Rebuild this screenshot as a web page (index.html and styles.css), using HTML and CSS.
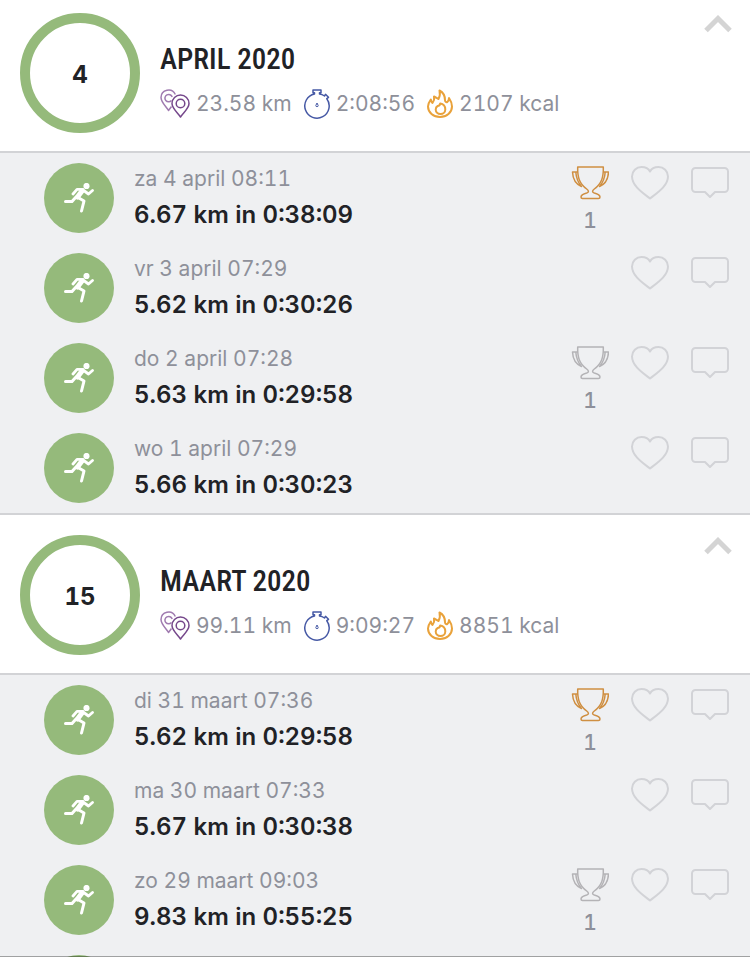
FILE: index.html
```html
<!DOCTYPE html>
<html lang="nl">
<head>
    <meta charset="utf-8">
    <meta name="viewport" content="width=device-width, initial-scale=1">
    <title>Activiteiten</title>

    <link rel="stylesheet" href="styles.css">
</head>
<body>
    <!-- Shared icons -->
    <svg class="sprite" width="0" height="0" aria-hidden="true">
        <symbol id="pins" viewBox="0 0 30 30">
            <path d="M11.5 17.5 8.500 21.500C7 18.500 1 13.500 1 8.500a7.500 7.500 0 0 1 14.300-3M11.500 11.500A3.700 3.700 0 1 1 12.200 8" stroke="#a07bb0"/>
            <path d="M20.500 28C18 24 12 19.500 12 14.500a8.500 8.500 0 0 1 17 0c0 5-6 9.500-8.500 13.500Z" stroke="#75478b"/>
            <circle cx="20.500" cy="14.500" r="4.300" stroke="#75478b"/>
        </symbol>
        <symbol id="timer" viewBox="0 0 26 30">
            <path d="M10.500 5V3.700H9V1h8v2.700h-1.500V5c1.900.2 3.500.9 5 2l1-1.700 3 3-1.700 1.400A12.200 12.200 0 1 1 10.500 5Z"/>
            <path class="fill" d="M13 14 14.200 16.500a1.200 1.200 0 1 1-2.400 0Z" stroke-width="1"/>
        </symbol>
        <symbol id="flame" viewBox="0 0 26 30">
            <path d="M7 7.500c.6 2.500 0 4.500-1.500 6.500C4.500 13 4 12 3.800 10.500 2 13 1 15 1 17.500a12 10.500 0 0 0 24 0c0-3-1-5.500-3-8.500-.1 2-.6 3-1.700 4-1.300.5-2.300-.5-2.300-1.800C18 7 16.500 3.500 12.500 1.500c.8 3.500.5 6-1 8.500C10.500 9.500 9 8.500 7 7.500Z"/>
            <path d="M13.200 14.500c-.3 1.500-1 2.500-2.500 2.500-1.500.8-2 2.200-2 3.500a4.800 4.500 0 0 0 9.600 0c0-3-1.800-5.500-5.100-6Z"/>
        </symbol>
        <symbol id="runner" viewBox="0 0 30 30">
            <circle class="head" cx="22.500" cy="3" r="3.100"/>
            <path d="M9 11 13 6.300H19M19 7l5.500 4L28.500 7.500" stroke-width="2.800"/>
            <path d="M18 8 13.500 14" stroke-width="5"/>
            <path d="M12 14 8 18.500H1.500M14 14.500l6 3.500L17.500 28" stroke-width="3"/>
        </symbol>
        <symbol id="trophy" viewBox="0 0 38 36">
            <path d="M6.700 2h25.600c.3 10-1.500 16.500-9 22-2.300 1.800-2.300 3.200 0 4 3.500 1 5.700 1.700 5.700 4 0 1-.5 1.500-1.500 1.500h-16c-1 0-1.500-.5-1.500-1.500 0-2.300 2.200-3 5.700-4 2.300-.8 2.300-2.200 0-4-7.500-5.500-9.300-12-9-22Z"/>
            <path d="M6.700 7H1.500c.3 6.500 3 12 9 14.500C7 17.500 5.200 13 4.800 7M32.300 7h5.200c-.3 6.500-3 12-9 14.500C32 17.500 33.800 13 34.200 7"/>
        </symbol>
        <symbol id="heart" viewBox="0 0 40 36">
            <path d="M20 33.500C13 28 2 21 2 11.500A9.500 9.500 0 0 1 11.500 2C15.500 2 18.500 3.500 20 6.500 21.500 3.500 24.500 2 28.500 2a9.500 9.500 0 0 1 9.500 9.500C38 21 27 28 20 33.500Z"/>
        </symbol>
        <symbol id="comment" viewBox="0 0 40 36">
            <path d="M5.500 3h29a3.500 3.500 0 0 1 3.500 3.500v17a3.500 3.500 0 0 1-3.500 3.500H25l-5 5-5-5H5.500A3.500 3.500 0 0 1 2 23.500v-17A3.500 3.500 0 0 1 5.500 3Z"/>
        </symbol>
        <symbol id="chevron" viewBox="0 0 28 18">
            <path d="M2 15.500 14 3.500 26 15.500"/>
        </symbol>
    </svg>

    <main class="history">
        <section class="month">
            <header class="month-header">
                <div class="ring">4</div>
                <div class="summary">
                    <h2>APRIL 2020</h2>
                    <ul class="stats">
                        <li><svg class="icon-pins"><use href="#pins"/></svg>23.58 km</li>
                        <li><svg class="icon-timer"><use href="#timer"/></svg>2:08:56</li>
                        <li><svg class="icon-flame"><use href="#flame"/></svg>2107 kcal</li>
                    </ul>
                </div>
                <button class="toggle" aria-label="Inklappen"><svg><use href="#chevron"/></svg></button>
            </header>
            <ul class="runs">
                <li class="run">
                    <div class="badge"><svg><use href="#runner"/></svg></div>
                    <div class="details">
                        <p class="date">za 4 april 08:11</p>
                        <p class="result">6.67 km in 0:38:09</p>
                    </div>
                    <div class="actions">
                        <button class="trophy gold"><svg><use href="#trophy"/></svg>1</button>
                        <button aria-label="Vind ik leuk"><svg><use href="#heart"/></svg></button>
                        <button aria-label="Reageren"><svg><use href="#comment"/></svg></button>
                    </div>
                </li>
                <li class="run">
                    <div class="badge"><svg><use href="#runner"/></svg></div>
                    <div class="details">
                        <p class="date">vr 3 april 07:29</p>
                        <p class="result">5.62 km in 0:30:26</p>
                    </div>
                    <div class="actions">
                        <button aria-label="Vind ik leuk"><svg><use href="#heart"/></svg></button>
                        <button aria-label="Reageren"><svg><use href="#comment"/></svg></button>
                    </div>
                </li>
                <li class="run">
                    <div class="badge"><svg><use href="#runner"/></svg></div>
                    <div class="details">
                        <p class="date">do 2 april 07:28</p>
                        <p class="result">5.63 km in 0:29:58</p>
                    </div>
                    <div class="actions">
                        <button class="trophy"><svg><use href="#trophy"/></svg>1</button>
                        <button aria-label="Vind ik leuk"><svg><use href="#heart"/></svg></button>
                        <button aria-label="Reageren"><svg><use href="#comment"/></svg></button>
                    </div>
                </li>
                <li class="run">
                    <div class="badge"><svg><use href="#runner"/></svg></div>
                    <div class="details">
                        <p class="date">wo 1 april 07:29</p>
                        <p class="result">5.66 km in 0:30:23</p>
                    </div>
                    <div class="actions">
                        <button aria-label="Vind ik leuk"><svg><use href="#heart"/></svg></button>
                        <button aria-label="Reageren"><svg><use href="#comment"/></svg></button>
                    </div>
                </li>
            </ul>
        </section>

        <section class="month">
            <header class="month-header">
                <div class="ring">15</div>
                <div class="summary">
                    <h2>MAART 2020</h2>
                    <ul class="stats">
                        <li><svg class="icon-pins"><use href="#pins"/></svg>99.11 km</li>
                        <li><svg class="icon-timer"><use href="#timer"/></svg>9:09:27</li>
                        <li><svg class="icon-flame"><use href="#flame"/></svg>8851 kcal</li>
                    </ul>
                </div>
                <button class="toggle" aria-label="Inklappen"><svg><use href="#chevron"/></svg></button>
            </header>
            <ul class="runs">
                <li class="run">
                    <div class="badge"><svg><use href="#runner"/></svg></div>
                    <div class="details">
                        <p class="date">di 31 maart 07:36</p>
                        <p class="result">5.62 km in 0:29:58</p>
                    </div>
                    <div class="actions">
                        <button class="trophy gold"><svg><use href="#trophy"/></svg>1</button>
                        <button aria-label="Vind ik leuk"><svg><use href="#heart"/></svg></button>
                        <button aria-label="Reageren"><svg><use href="#comment"/></svg></button>
                    </div>
                </li>
                <li class="run">
                    <div class="badge"><svg><use href="#runner"/></svg></div>
                    <div class="details">
                        <p class="date">ma 30 maart 07:33</p>
                        <p class="result">5.67 km in 0:30:38</p>
                    </div>
                    <div class="actions">
                        <button aria-label="Vind ik leuk"><svg><use href="#heart"/></svg></button>
                        <button aria-label="Reageren"><svg><use href="#comment"/></svg></button>
                    </div>
                </li>
                <li class="run">
                    <div class="badge"><svg><use href="#runner"/></svg></div>
                    <div class="details">
                        <p class="date">zo 29 maart 09:03</p>
                        <p class="result">9.83 km in 0:55:25</p>
                    </div>
                    <div class="actions">
                        <button class="trophy"><svg><use href="#trophy"/></svg>1</button>
                        <button aria-label="Vind ik leuk"><svg><use href="#heart"/></svg></button>
                        <button aria-label="Reageren"><svg><use href="#comment"/></svg></button>
                    </div>
                </li>
                <li class="run">
                    <div class="badge"></div>
                </li>
            </ul>
        </section>
    </main>
</body>
</html>
```
FILE: styles.css
```css
* {
    box-sizing: border-box;
}

body {
    margin: 0;
    background-color: #ffffff;
    color: #212226;
    font-family: Inter, "Liberation Sans", sans-serif;
    font-size: 21px;
    font-variant-numeric: tabular-nums;
}

h2, p, ul {
    margin: 0;
    padding: 0;
}

ul {
    list-style: none;
}

button {
    border: none;
    padding: 0;
    background: none;
    font: inherit;
    cursor: pointer;
}

svg {
    display: block;
    fill: none;
    stroke: currentColor;
    stroke-width: 1.5;
    stroke-linejoin: round;
}

.sprite {
    position: absolute;
}

/* Scrolling list, cut off at the bottom of the window */
.history {
    position: relative;
    height: 100vh;
    overflow: hidden;
}

/* Edge of the tab bar, drawn over the list */
.history::after {
    content: "";
    position: absolute;
    right: 0;
    bottom: 0;
    left: 0;
    height: 1px;
    background-color: rgba(0, 0, 0, 0.33);
}

/* Month header */
.month-header {
    display: flex;
    align-items: flex-start;
    padding: 20px 18px 18px 20px;
    border-bottom: 2px solid #d2d3d6;
}

.month:first-child .month-header {
    padding-top: 13px;
}

.ring {
    display: flex;
    align-items: center;
    justify-content: center;
    width: 120px;
    height: 120px;
    padding-top: 2px;
    border: 10px solid #95ba7b;
    border-radius: 50%;
    font-size: 24px;
    font-weight: 700;
}

.summary {
    flex: 1;
    padding: 28px 0 0 20px;
}

.summary h2 {
    font-family: "Roboto Condensed", "Liberation Sans Narrow", Roboto, sans-serif;
    font-size: 29px;
    font-weight: 500;
    line-height: 36px;
}

.stats {
    display: flex;
    gap: 12px;
    margin-top: 10px;
    color: #8e909a;
}

.stats li {
    display: flex;
    align-items: center;
    gap: 6px;
    line-height: 33px;
}

.icon-pins {
    width: 30px;
    height: 30px;
}

.icon-timer {
    width: 26px;
    height: 30px;
    color: #4659a5;
}

.icon-timer .fill {
    fill: currentColor;
}

.icon-flame {
    width: 26px;
    height: 30px;
    color: #e9a23b;
    stroke-width: 2;
}

.toggle {
    padding-top: 2px;
    color: #d4d4d4;
}

.toggle svg {
    width: 28px;
    height: 18px;
    stroke-width: 5;
    stroke-linejoin: miter;
}

/* Runs in a month */
.runs {
    background-color: #eff0f2;
    border-bottom: 2px solid #d2d3d6;
}

.run {
    display: flex;
    height: 90px;
    padding: 10px 10px 10px 44px;
}

.badge {
    display: flex;
    align-items: center;
    justify-content: center;
    width: 70px;
    height: 70px;
    border-radius: 50%;
    background-color: #95ba7b;
    color: #ffffff;
}

.badge svg {
    width: 30px;
    height: 30px;
    stroke-linecap: round;
}

.head {
    fill: currentColor;
    stroke: none;
}

.details {
    flex: 1;
    padding-left: 20px;
    line-height: 36px;
}

.date {
    margin-top: -2px;
    color: #8e909a;
}

.result {
    font-size: 24px;
    font-weight: 600;
}

.actions {
    display: flex;
    align-items: flex-start;
}

.actions button {
    width: 60px;
    padding-top: 2px;
    color: #d2d3d7;
    line-height: 40px;
}

.actions svg {
    width: 40px;
    height: 36px;
    margin: 0 auto;
    stroke-width: 2;
}

.actions .trophy {
    color: #8e909a;
    font-weight: 500;
}

.actions .trophy svg {
    width: 38px;
    color: #b4b3b6;
    stroke-width: 1.5;
}

.actions .gold svg {
    color: #cf8f42;
}
```
